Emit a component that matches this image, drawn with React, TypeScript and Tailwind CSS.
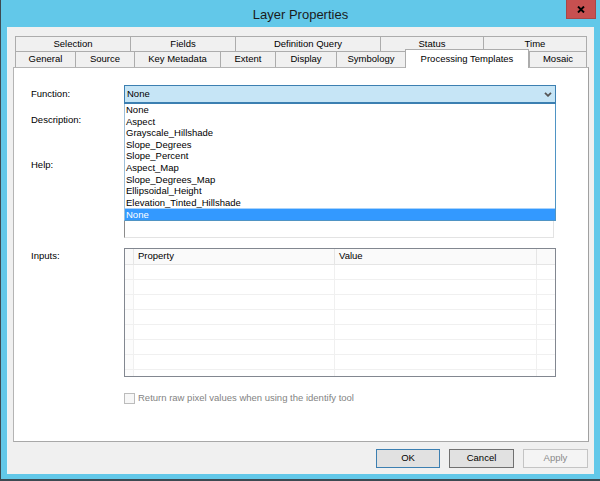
import React from 'react';

const row1 = [
  { label: 'Selection', w: 'w-[115px]' },
  { label: 'Fields', w: 'w-[105px]' },
  { label: 'Definition Query', w: 'w-[145px]' },
  { label: 'Status', w: 'w-[103px]' },
  { label: 'Time', w: 'w-[104px]' },
];

const row2 = [
  { label: 'General', w: 'w-[60px]' },
  { label: 'Source', w: 'w-[59px]' },
  { label: 'Key Metadata', w: 'w-[86px]' },
  { label: 'Extent', w: 'w-[55px]' },
  { label: 'Display', w: 'w-[61px]' },
  { label: 'Symbology', w: 'w-[69px]' },
  { label: 'Processing Templates', w: 'w-[124px]', active: true },
  { label: 'Mosaic', w: 'w-[58px]' },
];

const functions = [
  'None',
  'Aspect',
  'Grayscale_Hillshade',
  'Slope_Degrees',
  'Slope_Percent',
  'Aspect_Map',
  'Slope_Degrees_Map',
  'Ellipsoidal_Height',
  'Elevation_Tinted_Hillshade',
  'None',
];

function Tab({ label, w, active, last }: { label: string; w: string; active?: boolean; last?: boolean }) {
  if (active) {
    return (
      <div className={`${w} relative z-10 -mt-[2px] h-[19px] shrink-0 border-x border-t border-[#acacac] bg-white flex justify-center pt-[2px]`}>
        {label}
      </div>
    );
  }
  return (
    <div className={`${w} h-full shrink-0 border-l border-t border-[#acacac] bg-[#f0f0f0] flex items-center justify-center ${last ? 'border-r' : ''}`}>
      {label}
    </div>
  );
}

export default function App() {
  return (
    <div className="w-[600px] h-[481px] bg-[#62c8e9] border-l border-b-2 border-[#3d4a52] flex flex-col text-[9.5px] text-black font-['Liberation_Sans',Arial,sans-serif] overflow-hidden">
      {/* title bar */}
      <div className="relative h-[27px] shrink-0 flex justify-center pt-[5px]">
        <span className="text-[13px] text-[#1b1b1b]">Layer Properties</span>
        <div className="absolute top-0 right-[4px] w-[30px] h-[19px] bg-[#c75050] border border-t-0 border-[#a84646] flex items-center justify-center">
          <svg width="8" height="7" viewBox="0 0 8 7">
            <path d="M1 0.5 L7 6.5 M7 0.5 L1 6.5" stroke="#000" strokeWidth="1.9" />
          </svg>
        </div>
      </div>

      {/* client area */}
      <div className="ml-[6px] mr-[6px] h-[447px] shrink-0 bg-[#f0f0f0] border-l border-[#e9f6fb] flex flex-col px-[5px] pt-[9px]">
        {/* tab rows */}
        <div className="ml-[2px] flex flex-col">
          <div className="flex h-[15px]">
            {row1.map((t, i) => (
              <Tab key={t.label} label={t.label} w={t.w} last={i === row1.length - 1} />
            ))}
          </div>
          <div className="flex h-[16px] items-start">
            {row2.map((t, i) => (
              <Tab key={t.label} label={t.label} w={t.w} active={t.active} last={i === row2.length - 1} />
            ))}
          </div>
        </div>

        {/* page */}
        <div className="h-[375px] shrink-0 bg-white border border-[#b4b4b4] border-r-[#a0a0a0] border-b-[#a8a8a8] pl-[17px] pt-[17px] flex flex-col">
          {/* function */}
          <div className="flex h-[19px] items-center">
            <div className="w-[93px] shrink-0">Function:</div>
            <div className="relative w-[432px] h-[19px]">
              <div className="h-full bg-[#c6e5f6] border border-[#3c7fb1] border-b-2 flex items-center justify-between pl-[2px] pr-[3px]">
                <span>None</span>
                <svg width="8" height="5" viewBox="0 0 8 5">
                  <path d="M1 0.8 L4 3.8 L7 0.8" stroke="#555" strokeWidth="1.8" fill="none" />
                </svg>
              </div>
              {/* open drop-down list */}
              <div className="absolute left-0 top-full w-[432px] z-20 bg-white border-x border-b border-[#4f94c4] border-l-[#9ebfd9] flex flex-col">
                {functions.map((f, i) =>
                  i === functions.length - 1 ? (
                    <div key={i} className="h-[12px] leading-[12px] pl-[1px] bg-[#3399ff] text-white border-t border-[#a8d2fb]">
                      {f}
                    </div>
                  ) : (
                    <div key={i} className="h-[11.6px] leading-[11.6px] pl-[1px]">
                      {f}
                    </div>
                  )
                )}
              </div>
            </div>
          </div>

          {/* description */}
          <div className="flex mt-[5px]">
            <div className="w-[93px] shrink-0 pt-[4px]">Description:</div>
            <div className="w-[430px] h-[41px] border border-[#a0a0a0] border-r-[#e3e3e3] border-b-[#e3e3e3]" />
          </div>

          {/* help */}
          <div className="flex mt-[5px]">
            <div className="w-[93px] shrink-0 pt-[3px]">Help:</div>
            <div className="w-[430px] h-[83px] border border-[#8c8c8c] border-r-[#e3e3e3] border-b-[#e3e3e3] bg-white" />
          </div>

          {/* inputs */}
          <div className="flex mt-[10px]">
            <div className="w-[93px] shrink-0 pt-[1px]">Inputs:</div>
            <div className="w-[432px] h-[129px] border border-[#828790] overflow-hidden flex flex-col">
              <div className="flex h-[16px] shrink-0 bg-[#fafafa] border-b border-[#e5e5e5]">
                <div className="w-[9px] border-r border-[#e5e5e5]" />
                <div className="w-[201px] border-r border-[#e5e5e5] pl-[4px] flex items-center">Property</div>
                <div className="w-[202px] border-r border-[#e5e5e5] pl-[4px] flex items-center">Value</div>
                <div className="flex-1" />
              </div>
              {Array.from({ length: 8 }).map((_, i) => (
                <div key={i} className="flex h-[15px] shrink-0 border-b border-[#f0f0f0]">
                  <div className="w-[9px] bg-[#fcfcfc] border-r border-[#f0f0f0]" />
                  <div className="w-[201px] border-r border-[#f0f0f0]" />
                  <div className="w-[202px] border-r border-[#f0f0f0]" />
                  <div className="flex-1" />
                </div>
              ))}
            </div>
          </div>

          {/* checkbox */}
          <div className="flex mt-[14px] ml-[93px] items-center">
            <div className="w-[11px] h-[11px] border border-[#bcbcbc] bg-[#f7f7f7]" />
            <span className="ml-[3px] text-[#838383]">Return raw pixel values when using the identify tool</span>
          </div>
        </div>

        {/* buttons */}
        <div className="flex justify-end gap-[9px] mt-[7px] pr-[1px]">
          <button className="w-[64px] h-[19px] bg-[#e1e1e1] border border-[#3c7fb1] text-black">OK</button>
          <button className="w-[65px] h-[19px] bg-[#e1e1e1] border border-[#707070] text-black">Cancel</button>
          <button className="w-[65px] h-[19px] bg-[#f4f4f4] border border-[#c4c4c4] text-[#8a8a8a]">Apply</button>
        </div>
      </div>
    </div>
  );
}
